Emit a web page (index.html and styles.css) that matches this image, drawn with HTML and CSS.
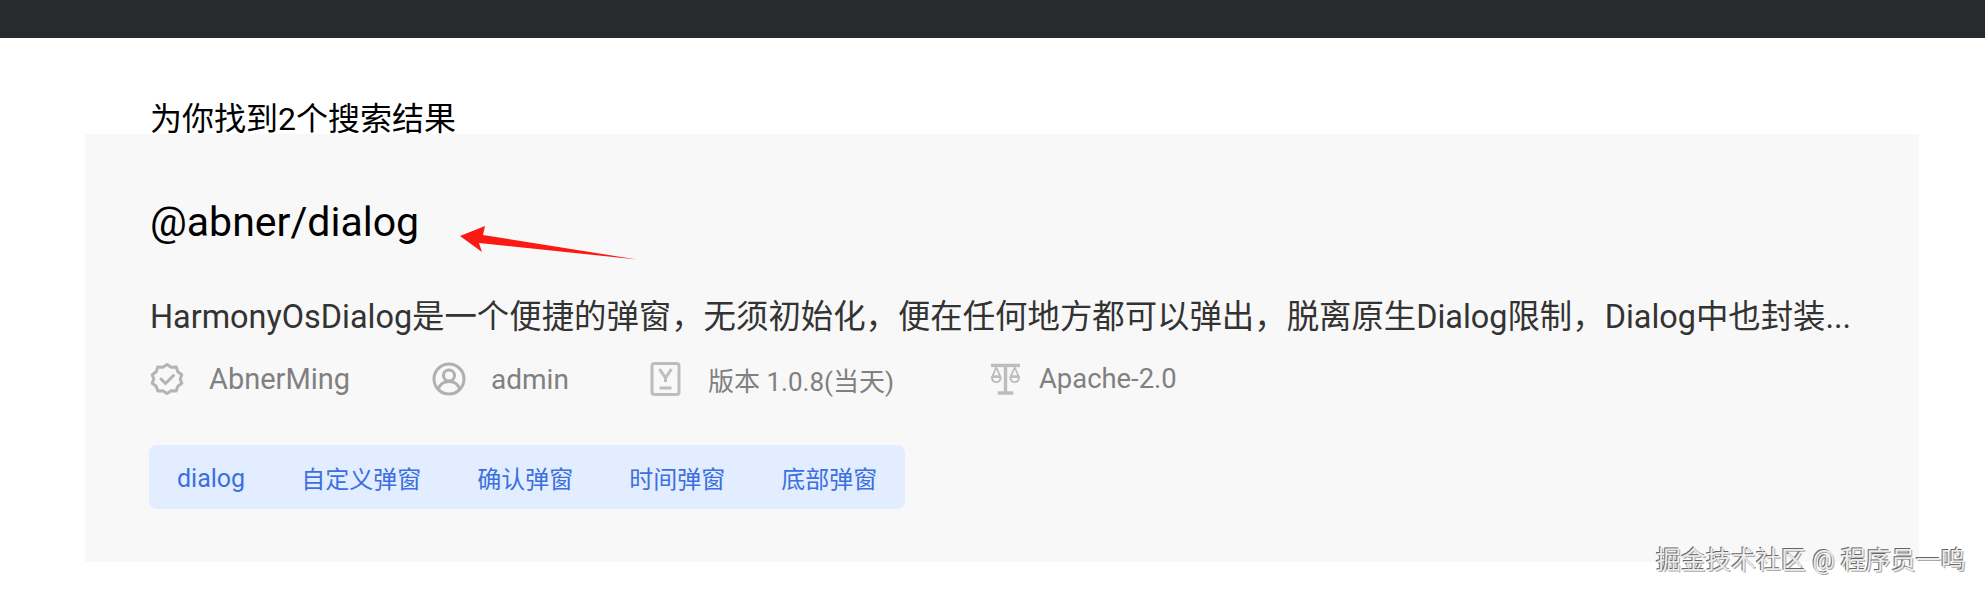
FILE: index.html
```html
<!DOCTYPE html>
<html lang="zh-CN">
<head>
<meta charset="utf-8">
<title>搜索结果</title>
<link rel="stylesheet" href="styles.css">
</head>
<body>
<header class="topbar"></header>
<main class="content">
  <h2 class="result-count">为你找到2个搜索结果</h2>
  <section class="card">
    <h3 class="pkg-name">@abner/dialog</h3>
    <p class="pkg-desc">HarmonyOsDialog是一个便捷的弹窗，无须初始化，便在任何地方都可以弹出，脱离原生Dialog限制，Dialog中也封装...</p>
    <div class="meta">
      <div class="meta-item m1">
        <svg class="icon" viewBox="0 0 34 34" fill="none" stroke="#b4b4b4" stroke-width="3" stroke-linejoin="round" stroke-linecap="round"><path d="M17 2.500l4.200 2.800 5-.3 1.600 4.800 4 3-1.600 4.200 1.600 4.200-4 3-1.600 4.800-5-.3-4.200 2.800-4.200-2.800-5 .3-1.600-4.800-4-3 1.600-4.200-1.600-4.200 4-3 1.600-4.800 5 .3z"/><path d="M11 17l4.500 4.500 8-8"/></svg>
        <span>AbnerMing</span>
      </div>
      <div class="meta-item m2">
        <svg class="icon" viewBox="0 0 34 34" fill="none" stroke="#b0b0b0" stroke-width="3"><circle cx="17" cy="17" r="15"/><circle cx="17" cy="13.500" r="5.500"/><path d="M6.500 27c1.500-5 5.500-7.500 10.500-7.500s9 2.500 10.500 7.500"/></svg>
        <span>admin</span>
      </div>
      <div class="meta-item m3">
        <svg class="icon icon-narrow" viewBox="0 0 30 34" fill="none" stroke="#bdbdbd" stroke-width="3" stroke-linejoin="round"><rect x="1.500" y="1.500" width="27" height="31" rx="2.500"/><path d="M9 7l6 9 6-9" stroke-width="3"/><path d="M15 16v4M9 26h12" stroke-width="3"/></svg>
        <span>版本 1.0.8(当天)</span>
      </div>
      <div class="meta-item m4">
        <svg class="icon icon-narrow" viewBox="0 0 32 34" fill="none" stroke="#bdbdbd" stroke-width="2.400" stroke-linejoin="round"><path d="M1 3h30" stroke-width="3.500"/><path d="M16 3v27M8 31.500h16" stroke-width="3.500"/><path d="M6.500 5L2.500 14h8zM25.500 5l-4 9h8z" stroke-width="1.800"/><path d="M2 15c.5 7 8.500 7 9 0zM21 15c.5 7 8.500 7 9 0z" stroke-width="2"/></svg>
        <span>Apache-2.0</span>
      </div>
    </div>
    <ul class="tags">
      <li class="tag tag-latin">dialog</li>
      <li class="tag">自定义弹窗</li>
      <li class="tag">确认弹窗</li>
      <li class="tag">时间弹窗</li>
      <li class="tag">底部弹窗</li>
    </ul>
  </section>
</main>
<svg class="arrow" viewBox="0 0 180 40" width="180" height="40"><path d="M1 12L26 2 24 11 178 35.500 20 19 23 28z" fill="#fb1a13"/></svg>
<div class="watermark">掘金技术社区 @ 程序员一鸣</div>
</body>
</html>
```
FILE: styles.css
```css
* { box-sizing: border-box; }
html, body { margin: 0; height: 100%; }
body {
  position: relative;
  overflow: hidden;
  background: #fff;
  font-family: Roboto, "Noto Sans CJK SC", sans-serif;
}
.topbar { height: 38px; background: #282b2e; }
.content { padding: 0 66px 0 85px; }
.result-count {
  margin: 0;
  padding: 59px 0 0 65px;
  height: 96px;
  font-size: 32px;
  line-height: 44px;
  font-weight: 400;
  color: #000;
}
.card {
  position: relative;
  height: 428px;
  padding: 62px 64px 0 65px;
  background: #f8f8f8;
}
.pkg-name {
  margin: 0;
  font-size: 41px;
  line-height: 52px;
  font-weight: 400;
  color: #000;
}
.pkg-desc {
  margin: 48px 0 0;
  font-size: 32.4px;
  line-height: 42px;
  color: #333;
  white-space: nowrap;
}
.meta { display: flex; align-items: center; margin-top: 20px; height: 42px; }
.meta-item { display: flex; align-items: center; color: #808080; }
.m1 { width: 282px; font-size: 29px; }
.m2 { width: 218px; font-size: 28px; }
.m3 { width: 340px; font-size: 26px; }
.m4 { font-size: 27.4px; }
.m4 .icon-narrow { margin-right: 18px; }
.icon { width: 34px; height: 34px; margin-right: 25px; flex: none; }
.icon-narrow { width: 31px; margin-right: 27px; }
.tags {
  display: inline-flex;
  margin: 45px 0 0 -1px;
  padding: 0;
  list-style: none;
  height: 64px;
  align-items: center;
  background: #e2edff;
  border-radius: 8px;
}
.tag { padding: 0 28px; font-size: 24px; color: #3c6fe0; }
.tag-latin { padding-top: 2px; font-size: 25px; }
.arrow { position: absolute; left: 459px; top: 224px; }
.watermark {
  position: absolute;
  left: 1656px;
  top: 544px;
  font-size: 25px;
  line-height: 34px;
  color: #ececec;
  text-shadow: -1px -1px 0 #666, 1px 1px 0 #aaa;
  white-space: nowrap;
}
```
